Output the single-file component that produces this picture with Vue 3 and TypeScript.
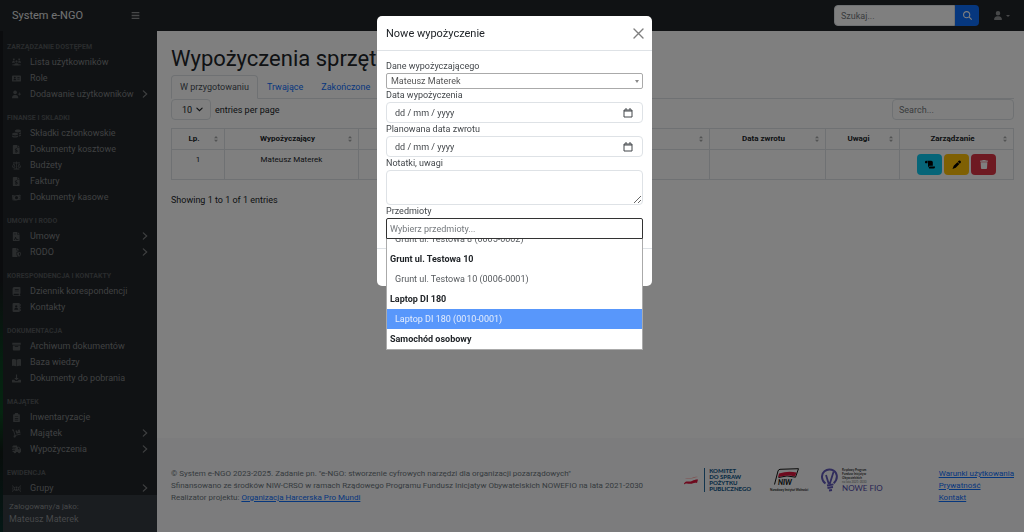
<script setup lang="ts">
import { ref } from 'vue'

interface MenuItem { label: string; icon: string; more?: boolean }
interface MenuSection { title: string; items: MenuItem[] }

const icons: Record<string, string> = {
  users: 'M3.2 1a1.6 1.6 0 1 0 .01 0zM12.8 1a1.6 1.6 0 1 0 .01 0zM8 4.2a2 2 0 1 0 .01 0zM0 8.2C0 6.4 1.2 5.4 3 5.4h1.6c-.4 1.4 0 2.4.8 3.2H0zM16 8.2c0-1.800-1.200-2.800-3-2.800h-1.600c.4 1.400 0 2.400-.8 3.200H16zM3.500 13.500c0-2.500 1.500-4 3.500-4h2c2 0 3.500 1.500 3.500 4zM1 10.500h2v3H1zM13 10.500h2v3h-2z',
  card: 'M1.500 2.500h13a1.500 1.500 0 0 1 1.500 1.500v8a1.500 1.500 0 0 1-1.500 1.500h-13A1.500 1.500 0 0 1 0 12V4a1.500 1.500 0 0 1 1.500-1.500zM5 5a1.500 1.500 0 1 0 .01 0zM2.500 11h5c0-1.500-.8-2.300-2-2.300h-1c-1.200 0-2 .8-2 2.300zM9.500 5.500v1.200h4V5.500zM9.500 8.500v1.200h4V8.500z',
  userplus: 'M5.500 1a3.300 3.300 0 1 0 .01 0zM0 14.500c0-3.500 2-5.500 4.600-5.500h2c2.600 0 4.600 2 4.600 5.500zM12.500 4.500h1.300v2H16v1.300h-2.200v2h-1.300v-2h-2V6.500h2z',
  coins: 'M10.500 1c3 0 5.500 1 5.500 2.500S13.500 6 10.500 6 5 5 5 3.500 7.500 1 10.500 1zM16 5.500v2c0 1-1.500 1.800-3.500 2.200V7.600c1.400-.3 2.700-1 3.500-2.100zM16 9.500v1.500c0 1.200-1.500 2-3.500 2.300v-2c1.500-.3 2.800-.9 3.500-1.800zM5.500 6.500c3 0 5.500 1 5.500 2.500s-2.500 2.500-5.500 2.500S0 10.500 0 9s2.500-2.500 5.500-2.500zM0 11c1 1.200 3 1.800 5.500 1.800S10 12.200 11 11v1.800c0 1.400-2.500 2.400-5.500 2.400S0 14.200 0 12.800z',
  file: 'M3 0h6v4.500h4.500V14.500A1.500 1.500 0 0 1 12 16H3a1.500 1.500 0 0 1-1.500-1.500v-13A1.500 1.500 0 0 1 3 0zM10 0l3.500 3.500H10zM6.800 5.500v1C5.700 6.700 5 7.400 5 8.300c0 2 3.800 1.500 3.800 2.600 0 .8-2 .8-3.200.2l-.4 1.200c.5.300 1 .4 1.600.5v1.100h1.300v-1.100c1.200-.2 1.900-.9 1.900-1.900 0-2.300-3.800-1.700-3.800-2.700 0-.7 1.700-.6 2.700-.2l.4-1.200-1.200-.300v-1z',
  scale: 'M7.300 1h1.400v1.500l5.300-.5v1.200l-1.300.2L16 10c-.5 1.300-1.600 2-3 2s-2.500-.7-3-2l2.500-6-3.800.5V13.500H13V15H3v-1.500h4.300v-9L3.700 4 6 10c-.5 1.300-1.600 2-3 2s-2.500-.7-3-2l3-6.500-1-.3V2l5.300.5zM3 6l-1.700 4h3.400zM13 6l-1.700 4h3.400z',
  money: 'M0 3.500l3 .7c3 .5 5-1.200 10-.7l1-1.500.5 1.500 1.500.5-1 1v7.500c-5-1-7 1.500-10 .8L1 13zM8 5.500a2.800 2.800 0 1 0 .01 0zM2.500 6v1.500L4 6zM13.500 11V9.500L12 11zM2.500 10v1.500H4zM12 5l1.500 1.500V5z',
  contract: 'M3 0h6v4.500h4.500v10A1.500 1.500 0 0 1 12 16H3a1.500 1.500 0 0 1-1.500-1.500v-13A1.500 1.500 0 0 1 3 0zM10 0l3.500 3.500H10zM3.500 3v1.200H7V3zM3.500 12.500v1.200h1.700l1-2.500 1 2.500h4.300v-1.200H8.300l-1.500-3.500h-1l-1.400 3.500z',
  shield: 'M2 0h6v4.500h4v1L8 7v4c0 2 1 3.800 2.500 5H2A1.500 1.500 0 0 1 .5 14.500v-13A1.500 1.500 0 0 1 2 0zM9 0l3.500 3.500H9zM12.500 7L16 8.300c0 3.700-1 5.900-3.500 7.200C10 14.200 9 12 9 8.300zM12.500 8.500v5.400c1.300-.9 2-2.200 2.100-4.600z',
  book: 'M4 0h9.500A1.500 1.500 0 0 1 15 1.500v10l-1 .8V14.500h1V16H4a3 3 0 0 1-3-3V3a3 3 0 0 1 3-3zM5 3.500v1.200h7V3.500zM5 6.500v1.200h7V6.500zM4 12a1.200 1.200 0 0 0 0 2.500h8V12z',
  contact: 'M3 0h9a2 2 0 0 1 2 2v12a2 2 0 0 1-2 2H3a2 2 0 0 1-2-2V2a2 2 0 0 1 2-2zM14.500 2H16v3h-1.500zM14.500 6.500H16v3h-1.500zM14.500 11H16v3h-1.500zM7.500 4a2 2 0 1 0 .01 0zM4 12h7c0-2-1-3-2.500-3h-2C5 9 4 10 4 12z',
  archive: 'M.5 1.500h15V5H.5zM1.500 6h13v7.500a1.500 1.500 0 0 1-1.500 1.500H3a1.500 1.500 0 0 1-1.500-1.500zM5 7.500V9h6V7.500z',
  open: 'M0 2.500c3-1 5.500-.5 7.500.5v11.500C5 13.500 2.500 13.300 0 14zM16 2.500c-3-1-5.500-.5-7.500.5v11.500c2.500-1 5-1.200 7.500-.5z',
  download: 'M7 1h2v6h3l-4 4-4-4h3zM1 10h3l2 2.500h4L12 10h3a1 1 0 0 1 1 1v3a1 1 0 0 1-1 1H1a1 1 0 0 1-1-1v-3a1 1 0 0 1 1-1z',
  clipboard: 'M5 2a3 3 0 0 1 6 0h1.500A1.500 1.500 0 0 1 14 3.500v11a1.500 1.500 0 0 1-1.500 1.500h-9A1.500 1.500 0 0 1 2 14.500v-11A1.500 1.500 0 0 1 3.500 2zM5 6v1.200h6V6zM5 9v1.200h6V9zM5 12v1.200h6V12z',
  cart: 'M0 1h3l3 9.500 9-2.300.5 1.500-9 2.500a2 2 0 1 1-2-1L2 2.500H0zM6 3l3-.8.8 2.600 1.500-.4-.8-2.600L13.500 1l1.500 5.500-7 1.800z',
  truck: 'M2 1h7v2h3.500L16 7v5.500h-1a2.200 2.200 0 0 1-4.400 0H7.400a2.200 2.200 0 0 1-4.400 0H1V10h4V8.800H0V7.500h6V6.300H1V5h6V3.800H0V2.500h2zM10.500 4.500v3h3.800l-2.500-3z',
  group: 'M0 2l3 2-1 4 1 4-3 2v-1.500l1.500-1L.7 8l.8-3.500L0 3.500zM16 2l-3 2 1 4-1 4 3 2v-1.500l-1.500-1 .8-3.500-.8-3.500 1.500-1zM8 4.500a1.700 1.700 0 1 0 .01 0zM5.500 12c0-2 1-3.200 2.500-3.200s2.500 1.200 2.500 3.200zM4.200 5.500a1 1 0 1 0 .01 0zM11.800 5.500a1 1 0 1 0 .01 0zM3.500 8h1.800v3H3.500zM10.700 8h1.800v3h-1.800z'
}

const menu: MenuSection[] = [
  { title: 'ZARZĄDZANIE DOSTĘPEM', items: [
    { label: 'Lista użytkowników', icon: 'users' },
    { label: 'Role', icon: 'card' },
    { label: 'Dodawanie użytkowników', icon: 'userplus', more: true } ] },
  { title: 'FINANSE I SKŁADKI', items: [
    { label: 'Składki członkowskie', icon: 'coins' },
    { label: 'Dokumenty kosztowe', icon: 'file' },
    { label: 'Budżety', icon: 'scale' },
    { label: 'Faktury', icon: 'file' },
    { label: 'Dokumenty kasowe', icon: 'money' } ] },
  { title: 'UMOWY I RODO', items: [
    { label: 'Umowy', icon: 'contract', more: true },
    { label: 'RODO', icon: 'shield', more: true } ] },
  { title: 'KORESPONDENCJA I KONTAKTY', items: [
    { label: 'Dziennik korespondencji', icon: 'book' },
    { label: 'Kontakty', icon: 'contact' } ] },
  { title: 'DOKUMENTACJA', items: [
    { label: 'Archiwum dokumentów', icon: 'archive' },
    { label: 'Baza wiedzy', icon: 'open' },
    { label: 'Dokumenty do pobrania', icon: 'download' } ] },
  { title: 'MAJĄTEK', items: [
    { label: 'Inwentaryzacje', icon: 'clipboard' },
    { label: 'Majątek', icon: 'cart', more: true },
    { label: 'Wypożyczenia', icon: 'truck', more: true } ] },
  { title: 'EWIDENCJA', items: [
    { label: 'Grupy', icon: 'group', more: true } ] }
]

const columns = [
  { key: 'lp', label: 'Lp.' },
  { key: 'who', label: 'Wypożyczający' },
  { key: 'what', label: '' },
  { key: 'back', label: 'Data zwrotu' },
  { key: 'notes', label: 'Uwagi' },
  { key: 'manage', label: 'Zarządzanie' }
]

const options = [
  { text: 'Grunt ul. Testowa 8 (0005-0002)', group: false },
  { text: 'Grunt ul. Testowa 10', group: true },
  { text: 'Grunt ul. Testowa 10 (0006-0001)', group: false },
  { text: 'Laptop DI 180', group: true },
  { text: 'Laptop DI 180 (0010-0001)', group: false },
  { text: 'Samochód osobowy', group: true }
]
const active = ref(4)
const dates = [
  { id: 'date-from', label: 'Data wypożyczenia' },
  { id: 'date-to', label: 'Planowana data zwrotu' }
]
</script>

<template>
  <div class="app">
    <header class="topbar">
      <a class="brand" href="#">System e-NGO</a>
      <button class="burger" aria-label="Menu"><svg viewBox="0 0 14 14"><path d="M1 2.500h12M1 7h12M1 11.500h12" stroke="currentColor" stroke-width="2" /></svg></button>
      <form class="find" @submit.prevent>
        <input type="text" placeholder="Szukaj..." aria-label="Szukaj">
        <button aria-label="Szukaj"><svg viewBox="0 0 512 512"><path fill="currentColor" fill-rule="evenodd" d="M416 208c0 45.900-14.900 88.300-40 122.700L502.600 457.400c12.500 12.500 12.500 32.800 0 45.300s-32.800 12.500-45.300 0L330.700 376c-34.400 25.200-76.800 40-122.700 40C93.100 416 0 322.900 0 208S93.100 0 208 0S416 93.100 416 208zM208 352a144 144 0 1 0 0-288 144 144 0 1 0 0 288z" /></svg></button>
      </form>
      <button class="user" aria-label="Konto">
        <svg class="person" viewBox="0 0 448 512"><path fill="currentColor" d="M224 256A128 128 0 1 0 224 0a128 128 0 1 0 0 256zm-45.700 48C79.800 304 0 383.800 0 482.300C0 498.700 13.300 512 29.700 512H418.300c16.400 0 29.700-13.300 29.700-29.700C448 383.800 368.200 304 269.700 304H178.300z" /></svg>
        <svg class="caret" viewBox="0 0 8 4"><path fill="currentColor" d="M0 0h8L4 4z" /></svg>
      </button>
    </header>

    <div class="body">
      <aside class="sidebar">
        <nav>
          <section v-for="s in menu" :key="s.title">
            <h2>{{ s.title }}</h2>
            <a v-for="i in s.items" :key="i.label" href="#" class="item">
              <svg class="ico" viewBox="0 0 16 16"><path fill="currentColor" fill-rule="evenodd" :d="icons[i.icon]" /></svg>
              <span>{{ i.label }}</span>
              <svg v-if="i.more" class="more" viewBox="0 0 10 14"><path d="M2 1.500L8 7l-6 5.500" fill="none" stroke="currentColor" stroke-width="2" stroke-linecap="round" /></svg>
            </a>
          </section>
        </nav>
        <div class="logged"><small>Zalogowany/a jako:</small><span>Mateusz Materek</span></div>
      </aside>

      <div class="content">
        <main>
          <h1>Wypożyczenia sprzętu</h1>
          <nav class="tabs">
            <a href="#" class="on">W przygotowaniu</a><a href="#">Trwające</a><a href="#">Zakończone</a>
          </nav>
          <div class="tools">
            <div class="pager">
              <span class="pick">
                <select id="per-page"><option>10</option></select>
                <svg viewBox="0 0 12 8"><path d="M1.500 1.500L6 6l4.500-4.500" fill="none" stroke="currentColor" stroke-width="2" stroke-linecap="round" /></svg>
              </span>
              <label for="per-page">entries per page</label>
            </div>
            <input class="search" type="text" placeholder="Search..." aria-label="Search">
          </div>
          <table>
            <colgroup><col v-for="c in columns" :key="c.key" :class="c.key"></colgroup>
            <thead>
              <tr>
                <th v-for="c in columns" :key="c.key">
                  <div class="th"><span>{{ c.label }}</span>
                    <svg viewBox="0 0 8 14"><path fill="currentColor" d="M0 5.500L4 1l4 4.500zM0 8.500h8L4 13z" /></svg></div>
                </th>
              </tr>
            </thead>
            <tbody>
              <tr>
                <td>1</td><td>Mateusz Materek</td><td></td><td></td><td></td>
                <td>
                  <div class="acts">
                    <button class="cyan" aria-label="Protokół"><svg viewBox="0 0 16 14"><path fill="currentColor" d="M0 3a2 2 0 0 1 4 0v2H.8A2 2 0 0 1 0 3zM3.500 1H10a2.500 2.500 0 0 1 2.500 2.500V9H7.500A1.500 1.500 0 0 0 6 10.500v1A2 2 0 0 1 4.800 10V3A3 3 0 0 0 3.500 1zM7 10h9v1a2.500 2.500 0 0 1-2.500 2.500H7a2 2 0 0 1-1-1.500z" /></svg></button>
                    <button class="yellow" aria-label="Edytuj"><svg viewBox="0 0 16 16"><path fill="currentColor" d="M11 1.500a2 2 0 0 1 2.800 0l.7.7a2 2 0 0 1 0 2.800L13 6.500 9.500 3zM8.700 3.800l3.500 3.500-6.500 6.500L0 16l2.200-5.700z" /></svg></button>
                    <button class="red" aria-label="Usuń"><svg viewBox="0 0 448 512"><path fill="currentColor" d="M135.200 17.700L128 32H32C14.300 32 0 46.300 0 64S14.300 96 32 96H416c17.700 0 32-14.300 32-32s-14.300-32-32-32H320l-7.200-14.300C307.400 6.800 296.300 0 284.200 0H163.800c-12.100 0-23.200 6.800-28.600 17.700zM416 128H32L53.200 467c1.600 25.300 22.600 45 47.900 45H346.900c25.300 0 46.300-19.700 47.900-45L416 128z" /></svg></button>
                  </div>
                </td>
              </tr>
            </tbody>
          </table>
          <p class="info">Showing 1 to 1 of 1 entries</p>
        </main>

        <footer>
          <div class="credits">
            © System e-NGO 2023-2025. Zadanie pn. "e-NGO: stworzenie cyfrowych narzędzi dla organizacji pozarządowych"<br>
            Sfinansowano ze środków NIW-CRSO w ramach Rządowego Programu Fundusz Inicjatyw Obywatelskich NOWEFIO na lata 2021-2030<br>
            Realizator projektu: <a href="#">Organizacja Harcerska Pro Mundi</a>
          </div>
          <div class="logos">
            <div class="komitet">
              <svg viewBox="0 0 14 9"><path fill="#ff9b9b" d="M1 3c3-2 5 0 8-1.500C11 .5 12 .5 14 1c-3 0-4 1.500-7 1.500S3 2 1 3z" /><path fill="#dc143c" d="M0 7.500C2 4 5 6.500 8 5c2-1 3-1.500 6-1.500L13 7c-3-1-4 .8-6.500.8C4 7.800 2 6.500 0 8.500z" /></svg>
              <p>KOMITET<br>DO SPRAW<br>POŻYTKU<br>PUBLICZNEGO</p>
            </div>
            <svg class="niw" viewBox="0 0 34 24">
              <path d="M4.500 16.500L8 3q.5-1.500 2-1.700L28.500.7l-3 8.500Q17 6.500 8.500 9.500" fill="none" stroke="#111" stroke-width="1" />
              <path d="M9 5.500Q18 2.500 26.500 4.500L25 8.500Q17 6 8 9.300z" fill="#dc143c" />
              <text x="8" y="17" class="niw-name">NIW</text>
              <text x="0" y="23" class="niw-sub">Narodowy Instytut Wolności</text>
            </svg>
            <div class="fio">
              <svg viewBox="0 0 18 24"><path d="M4.500 15.500C0 12.500 0 6 3.500 3.200c4-3.300 11-1.800 12.200 4 .6 3.500-.7 6-3 8" fill="none" stroke="#6058b8" stroke-width="2" /><path d="M5 7l2.500 8h1.500l3.500-11M6 17.500l6.500-1.200M6.500 20l5.500-1M8 22.500l3-.5" fill="none" stroke="#6058b8" stroke-width="1.800" /></svg>
              <div><p>Rządowy Program<br>Fundusz Inicjatyw<br>Obywatelskich<br><i>na lata 2021-2030</i></p><b>NOWE FIO</b></div>
            </div>
          </div>
          <nav class="links"><a href="#">Warunki użytkowania</a><a href="#">Prywatność</a><a href="#">Kontakt</a></nav>
        </footer>
      </div>
    </div>

    <div class="backdrop">
      <form class="modal" role="dialog" aria-labelledby="modal-title" @submit.prevent>
        <div class="modal-head">
          <h2 id="modal-title">Nowe wypożyczenie</h2>
          <button type="button" aria-label="Zamknij"><svg viewBox="0 0 11 11"><path d="M1 1l9 9M10 1L1 10" stroke="currentColor" stroke-width="1.400" stroke-linecap="round" /></svg></button>
        </div>
        <div class="modal-body">
          <label for="person">Dane wypożyczającego</label>
          <div class="field">
            <select id="person" class="person-select"><option>Mateusz Materek</option></select>
            <svg class="tri" viewBox="0 0 8 6"><path fill="currentColor" d="M0 0h8L4 6z" /></svg>
          </div>
          <template v-for="d in dates" :key="d.id">
            <label :for="d.id">{{ d.label }}</label>
            <div class="date">
              <input :id="d.id" type="text" value="dd / mm / yyyy">
              <button type="button" aria-label="Kalendarz"><svg viewBox="0 0 10 10"><path d="M1 2h8v7H1zM1 3h8M3 0v2M7 0v2" fill="none" stroke="currentColor" /></svg></button>
            </div>
          </template>
          <label for="notes">Notatki, uwagi</label>
          <textarea id="notes"></textarea>
          <label for="items">Przedmioty</label>
          <div class="combo">
            <input id="items" type="text" placeholder="Wybierz przedmioty...">
            <ul role="listbox" aria-label="Przedmioty">
              <li v-for="(o, n) in options" :key="o.text" :class="{ group: o.group, active: n === active }" @mouseenter="!o.group && (active = n)">{{ o.text }}</li>
            </ul>
          </div>
        </div>
        <div class="modal-foot"></div>
      </form>
    </div>
  </div>
</template>

<style>
body { margin: 0; overflow: hidden; }
</style>

<style scoped>
* { box-sizing: border-box; }
.app { min-height: 100vh; display: flex; flex-direction: column; font: 9px/14px Roboto, "Noto Sans", sans-serif; color: #212529; background: #fff; }
h1, h2, p, ul { margin: 0; padding: 0; font-weight: 400; }
a { text-decoration: none; color: #0d6efd; }
button { border: 0; padding: 0; background: none; font: inherit; color: inherit; display: flex; align-items: center; justify-content: center; }
input, select, textarea { font: inherit; color: inherit; outline: 0; min-width: 0; }
svg { display: block; flex: none; }

.topbar { height: 31px; flex: none; display: flex; align-items: center; background: #212529; color: #8f9193; padding: 0 14px 0 12px; }
.brand { color: #e4e5e6; width: 119px; font-size: 11px; white-space: nowrap; }
.burger svg { width: 9px; height: 9px; }
.find { display: flex; margin-left: auto; width: 145px; height: 21px; }
.find input { flex: 1; border: 1px solid #dee2e6; border-radius: 4px 0 0 4px; padding: 0 6px; background: #fff; }
.find button { width: 24px; background: #0d6efd; color: #fff; border-radius: 0 4px 4px 0; }
.find svg { width: 9px; height: 9px; }
input::placeholder { color: #75797d; opacity: 1; }
.user { margin-left: 15px; gap: 4px; }
.person { width: 8px; height: 9px; }
.caret { width: 4px; height: 2px; }

.body { flex: 1; display: flex; }
.sidebar { width: 157px; height: calc(100vh - 31px); flex: none; display: flex; flex-direction: column; border-left: 3px solid; border-image: linear-gradient(#16191c 0 50%, #0a4020 66%, #0b4a20 76%, #101a16 84%, #0a302c) 1; background: #212529; color: #7f8183; }
.sidebar nav { flex: 1; min-height: 0; overflow: hidden; }
.sidebar h2 { font-size: 7px; line-height: 8px; font-weight: 700; padding: 12px 4px 3px; color: #53575a; white-space: nowrap; }
.item { display: flex; align-items: center; height: 16px; padding: 0 9px; color: #7f8183; white-space: nowrap; }
.ico { width: 9px; height: 9px; margin-right: 9px; color: #54585b; }
.more { width: 6px; height: 8px; margin-left: auto; }
.logged { background: #343a40; padding: 6px; display: flex; flex-direction: column; color: #8d9093; }
.logged small { font-size: 8px; line-height: 12px; }
.logged span { line-height: 13px; }

.content { flex: 1; min-width: 0; display: flex; flex-direction: column; }
main { flex: 1; padding: 15px 10px 0 14px; }
h1 { font-size: 22px; line-height: 26px; margin-bottom: 3px; white-space: nowrap; }
.tabs { display: flex; height: 24px; border-bottom: 1px solid #dee2e6; }
.tabs a { padding: 0 8px; line-height: 23px; height: 24px; border: 1px solid transparent; }
.tabs .on { color: #495057; border-color: #dee2e6 #dee2e6 #fff; border-radius: 4px 4px 0 0; }
.tools { display: flex; justify-content: space-between; margin-bottom: 8px; }
.pager { display: flex; align-items: center; gap: 4px; }
.pick { position: relative; }
.pick select { display: block; appearance: none; width: 40px; height: 21px; border: 1px solid #dee2e6; border-radius: 4px; padding: 0 10px; background: #fff; }
.pick svg { position: absolute; right: 8px; top: 8px; width: 7px; height: 5px; }
.search { width: 122px; height: 21px; border: 1px solid #dee2e6; border-radius: 4px; padding: 0 6px; background: #fff; }
table { width: 100%; table-layout: fixed; border-collapse: collapse; font-size: 8px; line-height: 12px; }
th, td { border: 1px solid #dee2e6; padding: 4px; text-align: center; }
td { vertical-align: top; }
col.lp { width: 53px; } col.who { width: 134px; } col.back { width: 116px; } col.notes { width: 74px; } col.manage { width: 114px; }
.th { display: flex; align-items: center; }
.th span { flex: 1; white-space: nowrap; }
.th svg { width: 4px; height: 8px; margin: 0 2px; color: #a6a8a9; }
.acts { display: flex; justify-content: center; gap: 2px; }
.acts button { width: 25px; height: 21px; border-radius: 4px; color: #000; }
.acts svg { width: 10px; height: 9px; }
.acts .cyan { background: #0dcaf0; } .acts .yellow { background: #ffc107; } .acts .red { background: #dc3545; color: #fff; }
.info { margin-top: 13px; }

footer { display: flex; padding: 30px 10px 28px 14px; background: #f8f9fa; font-size: 8px; line-height: 12px; color: #6c757d; white-space: nowrap; }
footer a { text-decoration: underline; }
.credits { flex: 1; }
.logos { display: flex; align-items: flex-start; margin-right: 56px; }
.komitet { display: flex; align-items: center; gap: 6px; margin-right: 19px; }
.komitet svg { width: 14px; height: 9px; }
.komitet p { border-left: 1px solid #246b9c; padding-left: 4px; font: 900 6px/6px Lato, sans-serif; color: #145a8c; }
.niw { width: 34px; height: 24px; margin-right: 17px; overflow: visible; }
.niw-name { font: italic 900 7px Lato, sans-serif; fill: #111; }
.niw-sub { font: 700 3px Lato, sans-serif; fill: #222; }
.fio { display: flex; gap: 3px; }
.fio > svg { width: 18px; height: 24px; }
.fio p { font: 700 3px/4px Lato, sans-serif; color: #333; }
.fio i { font-weight: 400; font-style: normal; color: #777; }
.fio b { display: block; font: 400 8px/8px Lato, sans-serif; color: #5048a8; }
.links { display: flex; flex-direction: column; }

.backdrop { position: fixed; inset: 0; padding: 16px 0 0 5px; background: rgba(0, 0, 0, .5); }
.modal { width: 275px; margin: 0 auto; background: #fff; border-radius: 5px; }
.modal-head { display: flex; align-items: center; justify-content: space-between; height: 35px; padding: 0 8px 0 9px; border-bottom: 1px solid #dee2e6; }
.modal-head h2 { font-size: 11px; line-height: 15px; }
.modal-head button { color: #7f7f7f; }
.modal-head svg { width: 11px; height: 11px; }
.modal-body { padding: 9px; }
.modal-body label { display: block; line-height: 13px; color: #43474b; }
.field { position: relative; }
.person-select { appearance: none; display: block; width: 100%; height: 16px; border: 1px solid #aaa; border-radius: 2px; padding: 0 4px; background: #fff; color: #555; }
.tri { position: absolute; right: 4px; top: 7px; width: 4px; height: 3px; color: #888; }
.date { display: flex; height: 21px; border: 1px solid #dee2e6; border-radius: 4px; padding: 0 9px 0 8px; color: #43474b; }
.date input { flex: 1; border: 0; padding: 0; background: none; }
.date svg { width: 10px; height: 10px; }
textarea { display: block; width: 100%; height: 35px; border: 1px solid #dee2e6; border-radius: 4px; }
.combo { position: relative; }
.combo input { display: block; width: 100%; height: 21px; border: 1px solid #333; border-radius: 2px 2px 0 0; padding: 0 3px; }
.combo ul { position: absolute; top: 100%; left: 0; right: 0; height: 111px; overflow: hidden; display: flex; flex-direction: column; justify-content: flex-end; background: #fff; border: 1px solid #aaa; border-top: 0; list-style: none; }
.combo li { flex: none; height: 20px; line-height: 20px; padding: 0 8px; color: #55595d; }
.combo .group { padding: 0 3px; font-weight: 700; color: #212529; }
.combo .active { background: #5897fb; color: #e4edfd; }
.modal-foot { height: 38px; border-top: 1px solid #dee2e6; }
</style>
